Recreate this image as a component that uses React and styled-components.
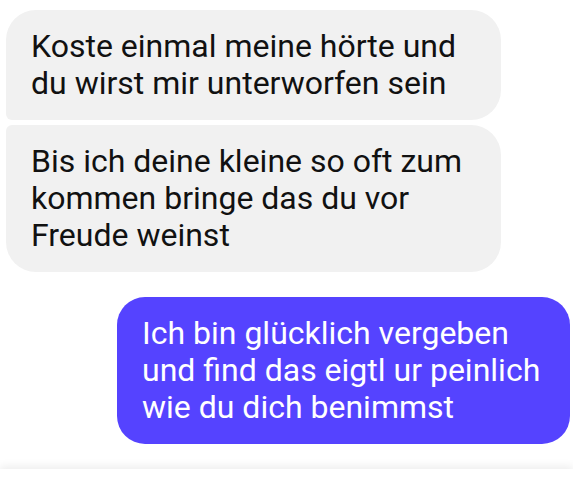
import React from 'react';
import styled, { createGlobalStyle } from 'styled-components';

const GlobalStyle = createGlobalStyle`
  html, body {
    margin: 0;
    padding: 0;
    background: #ffffff;
  }
  body {
    font-family: Roboto, 'Noto Sans', sans-serif;
  }
`;

const Screen = styled.div`
  width: 573px;
  height: 489px;
  display: flex;
  flex-direction: column;
  overflow: hidden;
  background: #ffffff;
`;

const Thread = styled.div`
  flex: 1;
  display: flex;
  flex-direction: column;
  padding: 10px 3px 0 6px;
`;

const Group = styled.div`
  display: flex;
  flex-direction: column;
  align-items: ${p => (p.mine ? 'flex-end' : 'flex-start')};
  gap: 5px;
  margin-bottom: 25px;
`;

const Bubble = styled.div`
  box-sizing: border-box;
  width: ${p => p.w}px;
  padding: 18px 20px 18px 25px;
  font-size: 32px;
  line-height: 37px;
  white-space: pre-line;
  color: ${p => (p.mine ? '#ffffff' : '#111111')};
  background: ${p => (p.mine ? '#5543ff' : '#f1f1f1')};
  border-radius: ${p => p.radius};
`;

const Composer = styled.div`
  height: 22px;
  background: #ffffff;
  box-shadow: 0 -3px 9px rgba(0, 0, 0, 0.07);
`;

const App = () => {
  return (
    <>
      <GlobalStyle />
      <Screen>
        <Thread>
          <Group>
            <Bubble w={495} radius='30px 30px 30px 6px'>
              {'Koste einmal meine hörte und\ndu wirst mir unterworfen sein'}
            </Bubble>
            <Bubble w={495} radius='6px 30px 30px 30px'>
              {'Bis ich deine kleine so oft zum\nkommen bringe das du vor\nFreude weinst'}
            </Bubble>
          </Group>
          <Group mine>
            <Bubble mine w={453} radius='28px'>
              {'Ich bin glücklich vergeben\nund find das eigtl ur peinlich\nwie du dich benimmst'}
            </Bubble>
          </Group>
        </Thread>
        <Composer />
      </Screen>
    </>
  );
};

export default App;
